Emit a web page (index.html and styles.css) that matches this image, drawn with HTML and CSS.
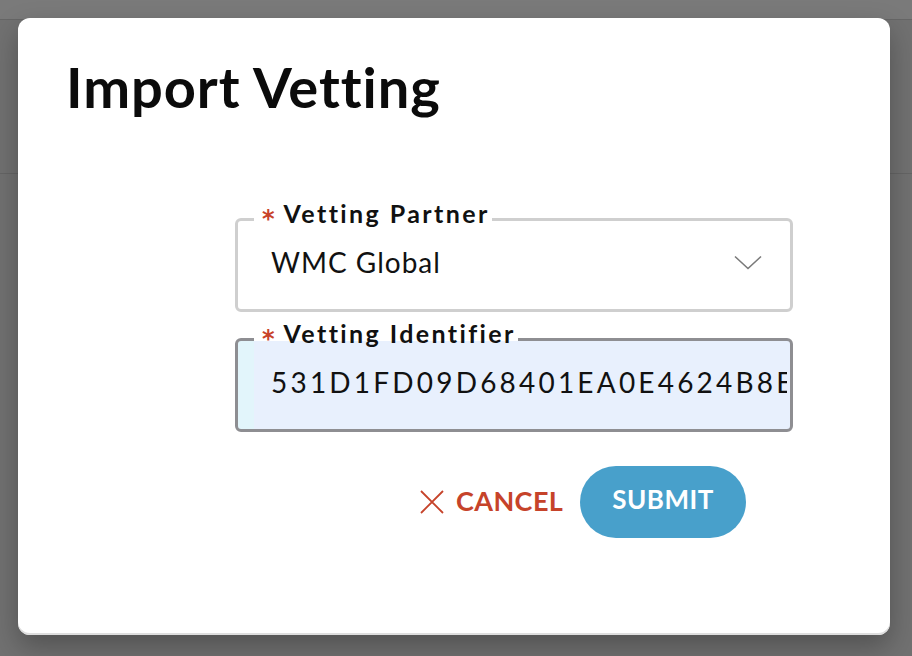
FILE: index.html
```html
<!DOCTYPE html>
<html lang="en">
<head>
<meta charset="utf-8">
<title>Import Vetting</title>
<link rel="stylesheet" href="styles.css">
</head>
<body>
<div class="page">
  <div class="page-top"></div>
  <div class="page-header"></div>
  <div class="page-body"></div>
</div>
<div class="modal" role="dialog" aria-labelledby="dlg-title">
  <h1 class="modal-title" id="dlg-title">Import Vetting</h1>
  <form class="form">
    <fieldset class="field">
      <legend class="field-label"><span class="req">*</span>Vetting Partner</legend>
      <div class="field-body">
        <span class="field-value">WMC Global</span>
        <svg class="chevron" width="28" height="15" viewBox="0 0 28 15" aria-hidden="true">
          <path d="M1 1.5 L14 13.5 L27 1.5" fill="none" stroke="#7a7a7a" stroke-width="1.6"/>
        </svg>
      </div>
    </fieldset>
    <fieldset class="field field-filled">
      <legend class="field-label"><span class="req">*</span>Vetting Identifier</legend>
      <div class="field-body field-body-input">
        <input class="field-input" type="text" value="531D1FD09D68401EA0E4624B8E" readonly>
      </div>
    </fieldset>
    <div class="actions">
      <button type="button" class="btn-cancel">
        <svg width="24" height="24" viewBox="0 0 24 24" aria-hidden="true">
          <path d="M1 1 L23 23 M23 1 L1 23" stroke="#c6432a" stroke-width="1.8" fill="none"/>
        </svg>
        <span>CANCEL</span>
      </button>
      <button type="button" class="btn-submit">SUBMIT</button>
    </div>
  </form>
</div>
</body>
</html>
```

FILE: styles.css
```css
* { box-sizing: border-box; }
html, body { margin: 0; padding: 0; }
body {
  width: 912px;
  height: 656px;
  overflow: hidden;
  background: #707070;
  font-family: "Lato", "Liberation Sans", sans-serif;
}
.page { height: 656px; display: flex; flex-direction: column; }
.page-top { height: 20px; background: #7a7a7a; border-bottom: 1px solid #666666; }
.page-header { height: 154px; background: #717171; border-bottom: 1px solid #656565; }
.page-body { flex: 1; background: #717171; }

.modal {
  position: absolute;
  left: 18px;
  top: 18px;
  width: 872px;
  height: 617px;
  background: #ffffff;
  border-radius: 12px;
  padding: 35px 49px 0 48px;
  box-shadow: 0 12px 28px rgba(0, 0, 0, 0.28), inset 0 -2px 0 #dedede;
}
.modal-title {
  margin: 0;
  font-size: 56px;
  line-height: 67px;
  font-weight: 700;
  color: #0b0b0b;
  letter-spacing: 0.95px;
}
.form {
  margin: 81px 0 0 169px;
  width: 558px;
}
.field {
  margin: 0;
  padding: 0 16px 23px 16px;
  border: 3px solid #cfcfcf;
  border-radius: 6px;
  background: #ffffff;
  min-width: 0;
}
.field-filled {
  margin-top: 9px;
  border-color: #8e8e92;
  padding-right: 0;
  background: linear-gradient(to right, #e2f5fb 16px, #e8f0fd 16px);
}
.field-label {
  padding: 0 2px 13px 8px;
  font-size: 25px;
  line-height: 24px;
  font-weight: 700;
  color: #111111;
  letter-spacing: 2.4px;
}
.req {
  display: inline-block;
  line-height: 0;
  vertical-align: -4px;
  color: #c8432a;
  font-family: "DejaVu Sans", sans-serif;
  font-size: 24px;
  font-weight: 700;
  margin-right: 9px;
  letter-spacing: 0;
}
.field-body {
  height: 48px;
  display: flex;
  align-items: center;
  justify-content: space-between;
  padding-left: 17px;
}
.field-value {
  font-size: 28px;
  line-height: 28px;
  color: #111111;
  letter-spacing: 1px;
}
.chevron { margin-right: 12px; }
.field-body-input { padding-right: 3px; }
.field-input {
  width: 100%;
  border: 0;
  padding: 0;
  margin: 0;
  background: transparent;
  font-family: inherit;
  font-size: 28px;
  line-height: 28px;
  height: 28px;
  color: #111111;
  outline: none;
  letter-spacing: 3.2px;
}
.actions {
  margin: 34px 0 0 185px;
  display: flex;
  align-items: center;
  gap: 17px;
}
.btn-cancel {
  display: flex;
  align-items: center;
  gap: 12px;
  border: 0;
  background: transparent;
  padding: 0 0 3px 0;
  font-family: inherit;
  font-size: 27px;
  font-weight: 700;
  color: #c6432a;
  letter-spacing: 0.4px;
  cursor: pointer;
}
.btn-cancel svg { margin-top: 3px; }
.btn-submit {
  height: 72px;
  padding: 0 32px 7px 32px;
  border: 0;
  border-radius: 36px;
  background: #48a0cb;
  color: #ffffff;
  font-family: inherit;
  font-size: 26px;
  font-weight: 700;
  letter-spacing: 0.5px;
  cursor: pointer;
}
```
